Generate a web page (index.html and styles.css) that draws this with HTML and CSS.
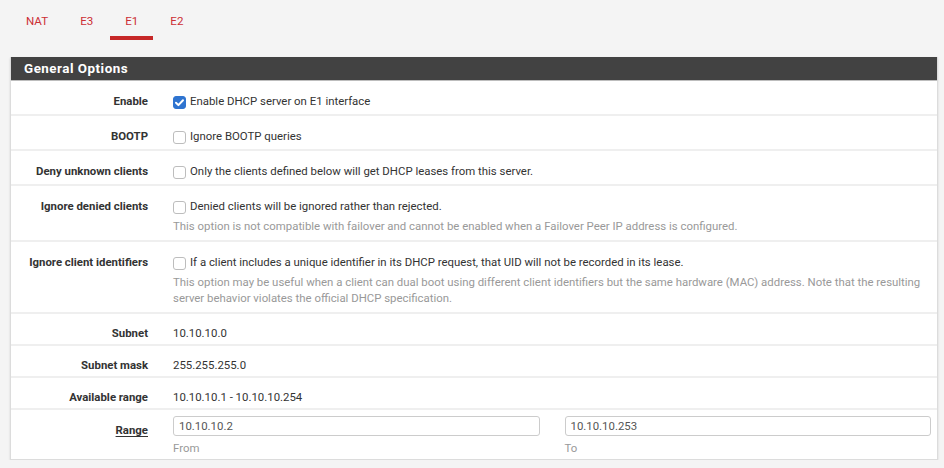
FILE: index.html
```html
<!DOCTYPE html>
<html>
<head>
<meta charset="utf-8">
<link rel="stylesheet" href="styles.css">
</head>
<body>
<div class="page">
  <nav class="tabs">
    <a class="tab">NAT</a>
    <a class="tab">E3</a>
    <a class="tab active">E1</a>
    <a class="tab">E2</a>
  </nav>
  <section class="panel">
    <h2 class="panel-heading">General Options</h2>
    <div class="panel-body">
      <div class="row">
        <div class="label">Enable</div>
        <div class="field"><label class="check"><span class="box checked"><svg viewBox="0 0 13 13" width="13" height="13"><path d="M3 6.8 L5.4 9.1 L10 4.2" fill="none" stroke="#fff" stroke-width="2" stroke-linecap="round" stroke-linejoin="round"/></svg></span>Enable DHCP server on E1 interface</label></div>
      </div>
      <div class="row">
        <div class="label">BOOTP</div>
        <div class="field"><label class="check"><span class="box"></span>Ignore BOOTP queries</label></div>
      </div>
      <div class="row">
        <div class="label">Deny unknown clients</div>
        <div class="field"><label class="check"><span class="box"></span>Only the clients defined below will get DHCP leases from this server.</label></div>
      </div>
      <div class="row with-help">
        <div class="label">Ignore denied clients</div>
        <div class="field"><label class="check"><span class="box"></span>Denied clients will be ignored rather than rejected.</label>
          <p class="help">This option is not compatible with failover and cannot be enabled when a Failover Peer IP address is configured.</p></div>
      </div>
      <div class="row with-help">
        <div class="label">Ignore client identifiers</div>
        <div class="field"><label class="check"><span class="box"></span>If a client includes a unique identifier in its DHCP request, that UID will not be recorded in its lease.</label>
          <p class="help">This option may be useful when a client can dual boot using different client identifiers but the same hardware (MAC) address. Note that the resulting<br>server behavior violates the official DHCP specification.</p></div>
      </div>
      <div class="row plain">
        <div class="label">Subnet</div>
        <div class="field">10.10.10.0</div>
      </div>
      <div class="row plain">
        <div class="label">Subnet mask</div>
        <div class="field">255.255.255.0</div>
      </div>
      <div class="row plain">
        <div class="label">Available range</div>
        <div class="field">10.10.10.1 - 10.10.10.254</div>
      </div>
      <div class="row range">
        <div class="label"><span class="link">Range</span></div>
        <div class="field split">
          <div class="col"><input class="input" type="text" value="10.10.10.2"><p class="help">From</p></div>
          <div class="col"><input class="input" type="text" value="10.10.10.253"><p class="help">To</p></div>
        </div>
      </div>
    </div>
  </section>
</div>
</body>
</html>
```

FILE: styles.css
```css
html, body {
  margin: 0;
  padding: 0;
  background: #f4f4f4;
  font-family: Roboto, "Liberation Sans", sans-serif;
  font-size: 11.4px;
  color: #333;
}

.page {
  padding: 0 6px 0 10px;
}

.tabs {
  display: flex;
  gap: 2px;
  padding-left: 1px;
  height: 40px;
}

.tab {
  display: block;
  padding: 13px 15px 7px;
  line-height: 16px;
  height: 16px;
  color: #cc2f35;
  font-size: 11.6px;
  border-bottom: 4px solid transparent;
}

.tab.active {
  border-bottom-color: #c62828;
}

.panel {
  margin-top: 17px;
  background: #fff;
  border: 1px solid #dcdcdc;
  border-top: 0;
  box-shadow: 0 1px 2px rgba(0, 0, 0, 0.12);
}

.panel-heading {
  margin: 0;
  height: 24px;
  line-height: 24px;
  padding: 0 13px;
  background: #424242;
  color: #fff;
  font-size: 13.4px;
  font-weight: bold;
  letter-spacing: 0.5px;
  border-bottom: 1px solid #bdbdbd;
  box-sizing: border-box;
}

.row {
  display: grid;
  grid-template-columns: 137px 1fr;
  column-gap: 25px;
  padding: 12px 6px 5px 0;
  line-height: 16px;
  border-bottom: 2px solid #efefef;
}

.row.with-help {
  padding-bottom: 6px;
}

.row.plain {
  padding: 11px 6px 3px 0;
}

.row.range {
  padding: 6px 6px 3px 0;
  border-bottom: 0;
}

.row.range .label {
  padding-top: 6px;
}

.label {
  text-align: right;
  font-weight: bold;
  color: #333;
}

.link {
  text-decoration: underline;
  text-underline-offset: 2px;
}

.check {
  display: flex;
  align-items: center;
  color: #333;
}

.box {
  flex: none;
  width: 11px;
  height: 11px;
  border: 1px solid #bdbdbd;
  border-radius: 3px;
  background: #fff;
  margin: 2px 4px 0 0;
  position: relative;
}

.box.checked {
  background: #2f74d0;
  border-color: #2f74d0;
}

.box svg {
  position: absolute;
  left: -1px;
  top: -1px;
}

.help {
  margin: 4px 0 0;
  color: #999;
  line-height: 16px;
}

.split {
  display: grid;
  grid-template-columns: 1fr 1fr;
  column-gap: 25px;
}

.input {
  display: block;
  width: 100%;
  box-sizing: border-box;
  height: 20px;
  padding: 0 5px;
  border: 1px solid #ccc;
  border-radius: 3px;
  font-family: Roboto, "Liberation Sans", sans-serif;
  font-size: 11.4px;
  color: #555;
  background: #fff;
}

.split .help {
  margin-top: 4px;
}
```
